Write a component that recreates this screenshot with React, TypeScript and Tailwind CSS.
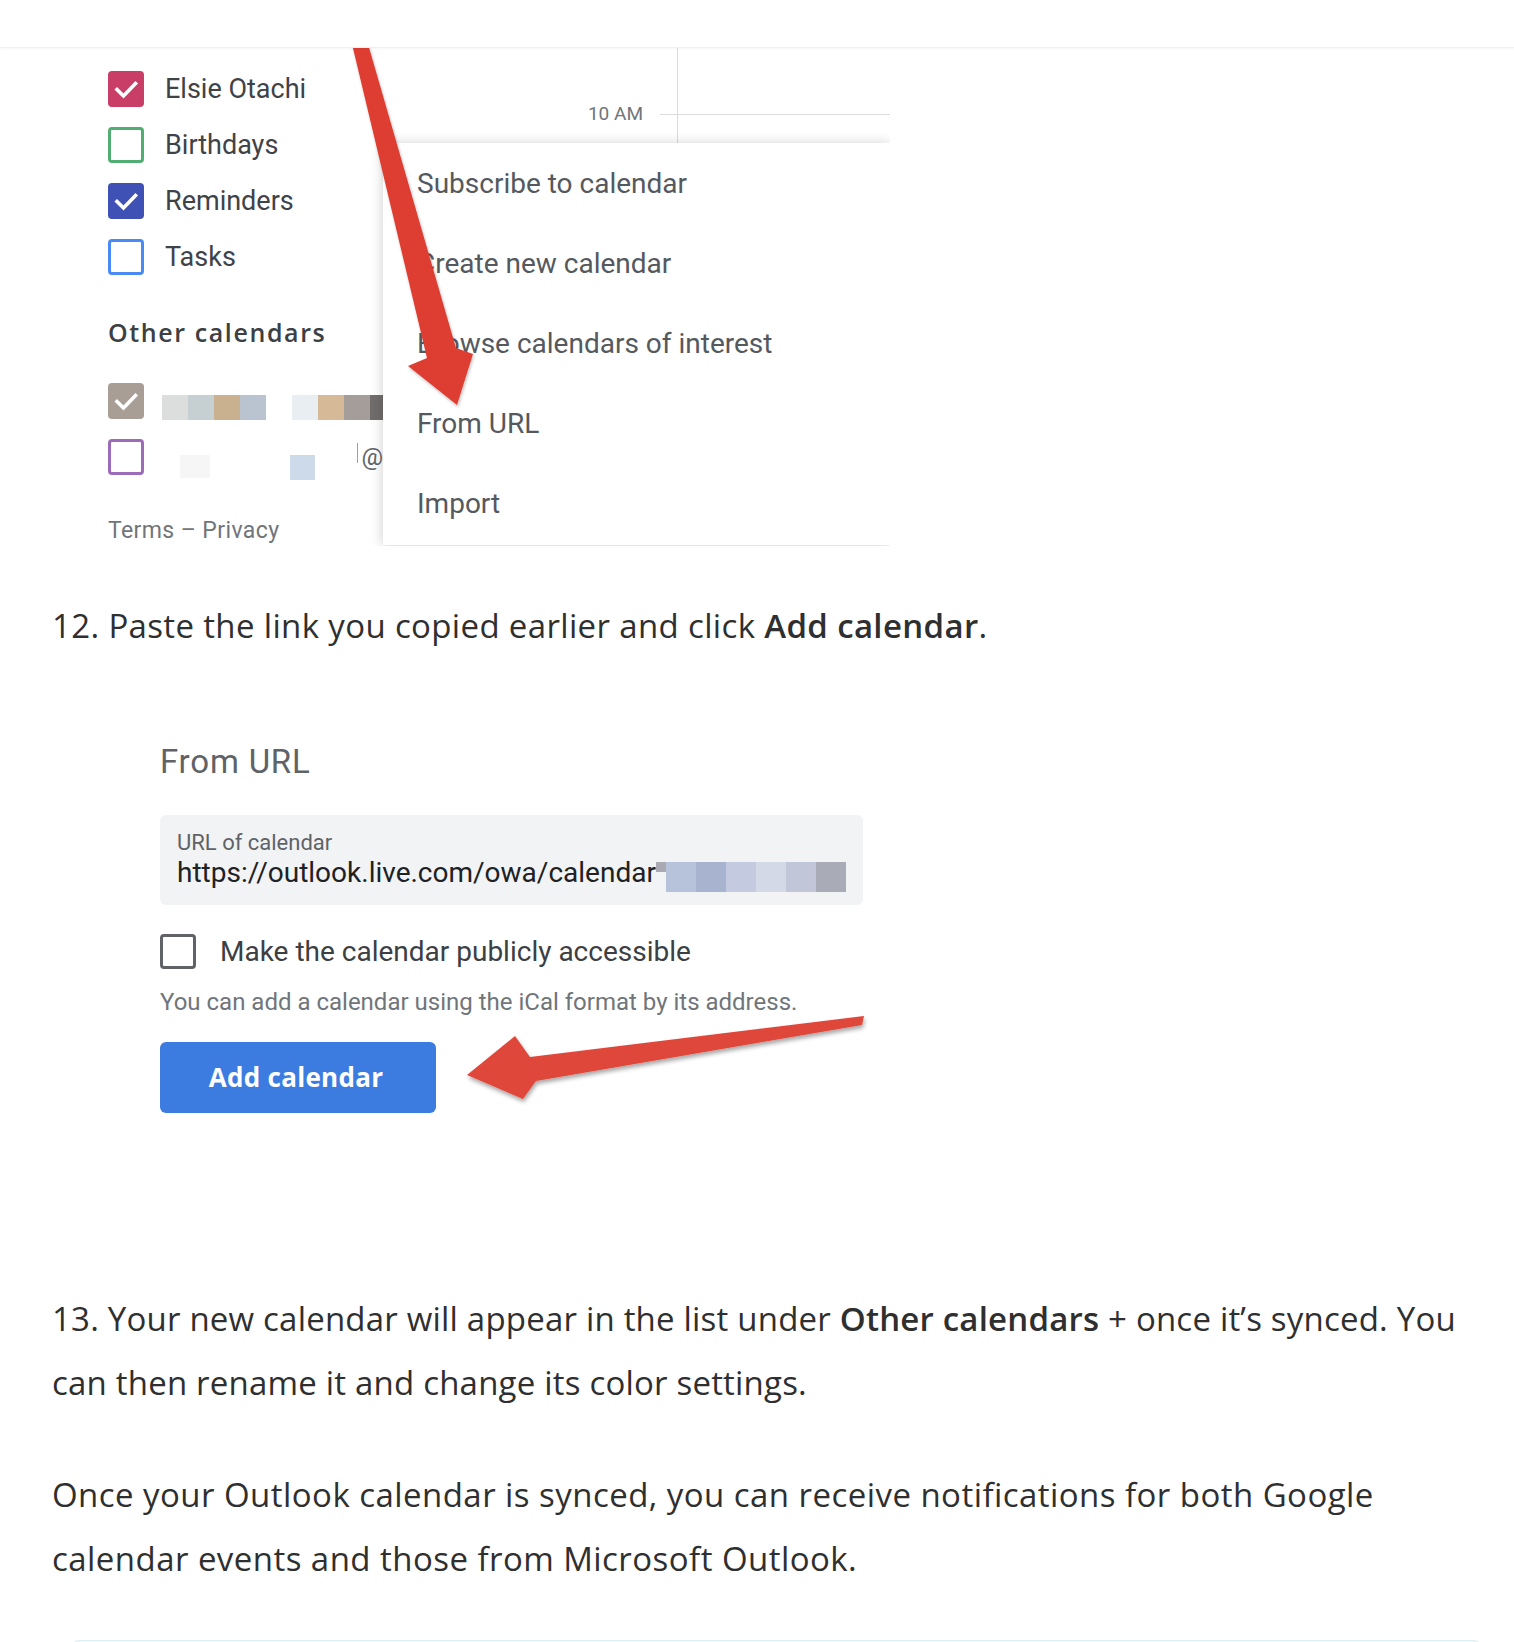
import React from 'react';

function Check() {
  return (
    <svg viewBox="0 0 36 36" className="w-full h-full">
      <path d="M9 18.5 L15.5 25 L27.5 12.5" fill="none" stroke="#ffffff" strokeWidth="3.6" strokeLinecap="square" />
    </svg>
  );
}

function ListRow({ box, label }: { box: React.ReactNode; label: string }) {
  return (
    <div className="h-[56px] flex items-center gap-[21px]">
      {box}
      <span className="text-[27px] leading-[32px] text-[#3f4347]">{label}</span>
    </div>
  );
}

const menuItems = [
  'Subscribe to calendar',
  'Create new calendar',
  'Browse calendars of interest',
  'From URL',
  'Import',
];

const urlBlocks = ['#b7c2db', '#a8b4cf', '#c4cbe0', '#d4d9e8', '#c1c7d8', '#a9abb7'];

export default function App() {
  return (
    <div className="relative w-[1514px] min-h-[1642px] bg-white overflow-hidden font-['Roboto',sans-serif]">
      <header className="h-[48px] bg-white border-b border-[#efefef] shadow-[0_1px_2px_rgba(0,0,0,0.04)] relative z-10" />

      {/* Screenshot 1: Google Calendar sidebar with add menu */}
      <div className="relative flex w-[890px] h-[498px] overflow-hidden">
        <div className="relative w-[383px] shrink-0 pl-[108px] pt-[13px]">
          <ListRow
            label="Elsie Otachi"
            box={<div className="w-[36px] h-[36px] rounded-[4px] bg-[#c93e66]"><Check /></div>}
          />
          <ListRow
            label="Birthdays"
            box={<div className="w-[36px] h-[36px] rounded-[4px] border-[3px] border-[#52ad72]" />}
          />
          <ListRow
            label="Reminders"
            box={<div className="w-[36px] h-[36px] rounded-[4px] bg-[#3f51b5]"><Check /></div>}
          />
          <ListRow
            label="Tasks"
            box={<div className="w-[36px] h-[36px] rounded-[4px] border-[3px] border-[#4a8af4]" />}
          />
          <div className="mt-[31px] text-[25px] leading-[32px] font-semibold tracking-[1.6px] text-[#3c4043] font-['Open_Sans',sans-serif]">
            Other calendars
          </div>
          <div className="mt-[25px] h-[56px] flex items-center">
            <div className="w-[36px] h-[36px] rounded-[4px] bg-[#a89e95] shrink-0"><Check /></div>
            <div className="ml-[18px] self-start mt-[22px] h-[25px] flex">
              <div className="w-[26px] bg-[#dcdddd]" />
              <div className="w-[26px] bg-[#c6cfd2]" />
              <div className="w-[26px] bg-[#c9b08f]" />
              <div className="w-[26px] bg-[#b9c4d0]" />
              <div className="w-[26px]" />
              <div className="w-[26px] bg-[#e9eef3]" />
              <div className="w-[26px] bg-[#d6b996]" />
              <div className="w-[26px] bg-[#a59d99]" />
              <div className="w-[20px] bg-[#716d6d]" />
            </div>
          </div>
          <div className="h-[56px] flex items-center">
            <div className="w-[36px] h-[36px] rounded-[4px] border-[3px] border-[#9c6cb8] shrink-0" />
            <div className="ml-[36px] self-start mt-[26px] w-[30px] h-[23px] bg-[#f6f6f7]" />
            <div className="ml-[80px] self-start mt-[26px] w-[26px] h-[25px] bg-[#cddaea]" />
            <div className="ml-[42px] self-start mt-[14px] w-[1px] h-[20px] bg-[#7aa5e6]" />
            <span className="ml-[3px] text-[24px] leading-[28px] text-[#5f6368]">@</span>
          </div>
          <div className="mt-[33px] text-[23px] leading-[26px] tracking-[0.4px] text-[#70757a]">Terms – Privacy</div>
        </div>

        <div className="w-[507px] shrink-0 flex flex-col">
          <div className="h-[95px] flex">
            <div className="w-[277px] shrink-0 flex justify-end pr-[17px] pt-[56px] text-[19px] leading-[20px] text-[#70757a]">
              10 AM
            </div>
            <div className="relative flex-1">
              <div className="absolute left-0 right-0 top-[66px] h-px bg-[#dadce0]" />
              <div className="absolute left-[17px] top-0 bottom-0 w-px bg-[#dadce0]" />
            </div>
          </div>
          <div className="relative z-[1] h-[402px] bg-white shadow-[0_1px_12px_rgba(0,0,0,0.2)]">
            {menuItems.map((m) => (
              <div key={m} className="h-[80px] flex items-center pl-[34px] text-[28px] leading-[33px] text-[#55595e]">
                {m}
              </div>
            ))}
          </div>
        </div>

        <svg
          className="absolute left-0 top-0 w-[890px] h-[498px] z-[2] pointer-events-none"
          viewBox="0 0 890 498"
        >
          <defs>
            <filter id="sh1" x="-20%" y="-20%" width="140%" height="140%">
              <feDropShadow dx="1" dy="2" stdDeviation="1.5" floodColor="#000" floodOpacity="0.25" />
            </filter>
          </defs>
          <polygon
            points="352,-4 368,-4 456,300 473,306 457,357 408,318 427,310"
            fill="#de3e33"
            filter="url(#sh1)"
          />
        </svg>
      </div>

      <p className="mt-[48px] px-[52px] text-[33px] leading-[64px] tracking-[0.35px] text-[#2f2f2f] font-['Open_Sans',sans-serif]">
        12. Paste the link you copied earlier and click <b className="font-semibold">Add calendar</b>.
      </p>

      {/* Screenshot 2: From URL dialog */}
      <div className="pl-[160px] pt-[86px]">
        <div className="text-[33px] leading-[36px] tracking-[0.8px] text-[#5f6368]">From URL</div>
        <div className="mt-[35px] w-[703px] rounded-[6px] bg-[#f1f3f4] pt-[15px] pb-[13px] px-[17px]">
          <div className="text-[22px] leading-[26px] text-[#5f6368]">URL of calendar</div>
          <div className="mt-[1px] flex items-start">
            <span className="text-[28px] leading-[32px] text-[#202124]">
              https://outlook.live.com/owa/calendar
            </span>
            <div className="mt-[5px] w-[14px] h-[10px] bg-[#aaa9b3]" />
            <div className="mt-[5px] h-[30px] flex">
              {urlBlocks.map((c, i) => (
                <div key={i} className="w-[30px] h-full" style={{ backgroundColor: c }} />
              ))}
            </div>
          </div>
        </div>
        <div className="mt-[29px] h-[35px] flex items-center gap-[24px]">
          <div className="w-[36px] h-[35px] rounded-[4px] border-[3px] border-[#5f6368]" />
          <span className="text-[28px] leading-[33px] text-[#3c4043]">
            Make the calendar publicly accessible
          </span>
        </div>
        <div className="mt-[20px] text-[24px] leading-[26px] text-[#70757a]">
          You can add a calendar using the iCal format by its address.
        </div>
        <div className="mt-[27px] w-[276px] h-[71px] rounded-[6px] bg-[#3c7ce1] flex items-center justify-center pr-[4px]">
          <span className="text-[26px] font-bold tracking-[0.3px] text-white font-['Open_Sans',sans-serif]">
            Add calendar
          </span>
        </div>
      </div>

      <svg
        className="absolute left-[460px] top-[1005px] w-[410px] h-[110px] pointer-events-none"
        viewBox="460 1005 410 110"
      >
        <defs>
          <filter id="sh2" x="-10%" y="-30%" width="120%" height="160%">
            <feDropShadow dx="1" dy="3" stdDeviation="2" floodColor="#000" floodOpacity="0.35" />
          </filter>
        </defs>
        <polygon
          points="864,1016 862,1025 536,1081 523,1099 467,1075 515,1036 530,1057"
          fill="#e0463b"
          filter="url(#sh2)"
        />
      </svg>

      <p className="mt-[174px] px-[52px] text-[33px] leading-[64px] tracking-[0.2px] text-[#2f2f2f] font-['Open_Sans',sans-serif]">
        13. Your new calendar will appear in the list under <b className="font-semibold">Other calendars</b> + once it’s synced. You
        <br />
        can then rename it and change its color settings.
      </p>

      <p className="mt-[48px] px-[52px] text-[33px] leading-[64px] tracking-[0.45px] text-[#2f2f2f] font-['Open_Sans',sans-serif]">
        Once your Outlook calendar is synced, you can receive notifications for both Google
        <br />
        calendar events and those from Microsoft Outlook.
      </p>

      <div className="mt-[49px] ml-[68px] w-[1417px] h-[40px] rounded-t-[12px] border border-[#dcecf0] bg-[#f4fafb]" />
    </div>
  );
}
